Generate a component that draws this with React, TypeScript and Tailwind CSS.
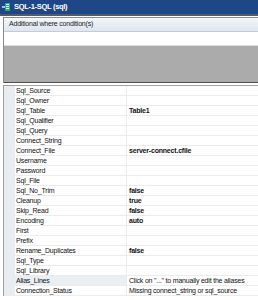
import React from "react";

const rows: [string, string, boolean][] = [
  ["Sql_Source", "", false],
  ["Sql_Owner", "", false],
  ["Sql_Table", "Table1", true],
  ["Sql_Qualifier", "", false],
  ["Sql_Query", "", false],
  ["Connect_String", "", false],
  ["Connect_File", "server-connect.cfile", true],
  ["Username", "", false],
  ["Password", "", false],
  ["Sql_File", "", false],
  ["Sql_No_Trim", "false", true],
  ["Cleanup", "true", true],
  ["Skip_Read", "false", true],
  ["Encoding", "auto", true],
  ["First", "", false],
  ["Prefix", "", false],
  ["Rename_Duplicates", "false", true],
  ["Sql_Type", "", false],
  ["Sql_Library", "", false],
  ["Alias_Lines", 'Click on "..." to manually edit the aliases', false],
  ["Connection_Status", "Missing connect_string or sql_source", false],
];

export default function App() {
  return (
    <div
      className="w-[258px] h-[300px] overflow-hidden bg-white text-[7px] tracking-[-0.2px] text-[#111]"
      style={{ fontFamily: "'Liberation Sans', Arial, sans-serif" }}
    >
      <div className="h-[14px] bg-[#1d4787] flex items-center pl-[2px] gap-[3px]">
        <svg width="9" height="10" viewBox="0 0 9 10">
          <rect x="0" y="4" width="3" height="2" fill="#9cc" />
          <rect x="3" y="1" width="5" height="8" fill="#3aa37a" />
          <rect x="4" y="2" width="3" height="1" fill="#bfe" />
          <rect x="4" y="4" width="3" height="1" fill="#bfe" />
          <rect x="4" y="6" width="3" height="1" fill="#bfe" />
        </svg>
        <span className="text-white text-[7.5px] font-semibold tracking-[-0.3px]">SQL-1-SQL (sql)</span>
      </div>
      <div className="h-[2px] bg-[#5a5a5a]" />
      <div className="h-px bg-white" />
      <div className="ml-[3px] border-l border-t border-[#8a8a8a] flex flex-col h-[66px]">
        <div className="h-[14px] bg-gradient-to-b from-[#f4f6fa] to-[#dfe5ee] border-b border-[#c3cbd8] flex items-center pl-[5px]">
          <span className="text-[#222]">Additional where condition(s)</span>
        </div>
        <div className="h-[14px] bg-white border-b border-[#e0e0e0]" />
        <div className="flex-1 bg-[#ababab] border-b border-[#505050]" />
      </div>
      <div className="h-[2px]" />
      <div className="ml-[3px] border-l border-t border-[#a0a0a0] flex flex-col">
        {rows.map(([name, value, bold], i) => (
          <div key={i} className="flex h-[10px]">
            <div className="w-[11px] bg-[#e9edf2] shrink-0" />
            <div
              className={`w-[112px] shrink-0 border-b border-r border-[#ececec] pl-[1px] leading-[9px] ${name === "Alias_Lines" ? "bg-[#eaeff6]" : ""}`}
            >
              {name}
            </div>
            <div
              className={`flex-1 border-b border-[#ececec] pl-[2px] leading-[9px] whitespace-nowrap overflow-hidden ${bold ? "font-bold" : ""}`}
            >
              {value}
            </div>
          </div>
        ))}
      </div>
    </div>
  );
}
